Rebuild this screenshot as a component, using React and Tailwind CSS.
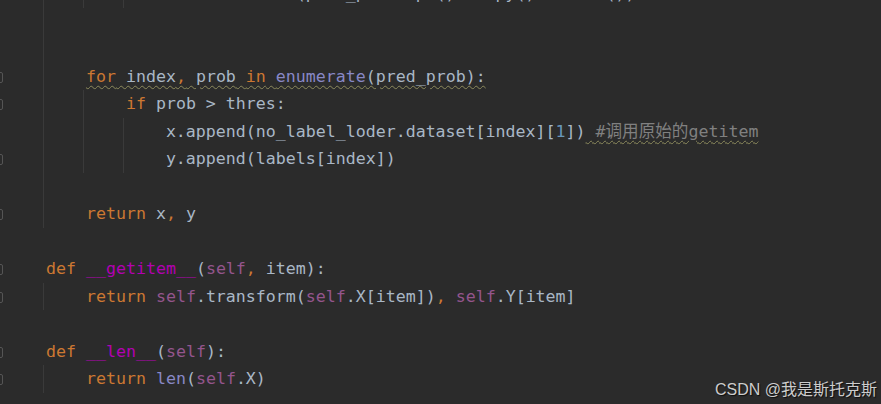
const K = "text-[#cc7832]";
const S = "text-[#94558d]";
const M = "text-[#b200b2]";
const B = "text-[#8888c6]";
const N = "text-[#6897bb]";
const WAVY = "underline decoration-wavy decoration-[#8c8a5c] decoration-1 underline-offset-[3px]";

const GUIDE_X = ["left-[43px]", "left-[83px]", "left-[123px]"];

const lines = [
  {
    guides: [0, 1, 2],
    code: (
      <>
        {"                         (pred_prob.cpu().numpy().tolist())"}
      </>
    ),
  },
  { guides: [0] },
  { guides: [0] },
  {
    guides: [0],
    fold: true,
    code: (
      <>
        {"    "}
        <span className={WAVY}>
          <span className={K}>for</span> index<span className={K}>,</span> prob{" "}
          <span className={K}>in</span> <span className={B}>enumerate</span>(pred_prob):
        </span>
      </>
    ),
  },
  {
    guides: [0, 1],
    fold: true,
    code: (
      <>
        {"        "}
        <span className={K}>if</span> prob &gt; thres:
      </>
    ),
  },
  {
    guides: [0, 1, 2],
    code: (
      <>
        {"            x.append(no_label_loder.dataset[index]["}
        <span className={N}>1</span>
        {"])"}
        <span className={`${WAVY} text-[#808080]`}>{" #调用原始的getitem"}</span>
      </>
    ),
  },
  {
    guides: [0, 1, 2],
    fold: true,
    code: <>{"            y.append(labels[index])"}</>,
  },
  { guides: [0] },
  {
    guides: [0],
    fold: true,
    code: (
      <>
        {"    "}
        <span className={K}>return</span> x<span className={K}>,</span> y
      </>
    ),
  },
  { guides: [] },
  {
    guides: [],
    fold: true,
    code: (
      <>
        <span className={K}>def</span> <span className={M}>__getitem__</span>(
        <span className={S}>self</span>
        <span className={K}>,</span> item):
      </>
    ),
  },
  {
    guides: [0],
    fold: true,
    code: (
      <>
        {"    "}
        <span className={K}>return</span> <span className={S}>self</span>.transform(
        <span className={S}>self</span>.X[item])<span className={K}>,</span>{" "}
        <span className={S}>self</span>.Y[item]
      </>
    ),
  },
  { guides: [] },
  {
    guides: [],
    fold: true,
    code: (
      <>
        <span className={K}>def</span> <span className={M}>__len__</span>(
        <span className={S}>self</span>):
      </>
    ),
  },
  {
    guides: [0],
    fold: true,
    code: (
      <>
        {"    "}
        <span className={K}>return</span> <span className={B}>len</span>(
        <span className={S}>self</span>.X)
      </>
    ),
  },
  { guides: [] },
];

function CodeLine({ line }) {
  return (
    <div className="relative h-[27.5px] whitespace-pre pl-[46px] leading-[27.5px]">
      {line.guides.map((g) => (
        <div key={g} className={`absolute top-0 h-full w-px bg-[#3a3a3a] ${GUIDE_X[g]}`} />
      ))}
      {line.fold && (
        <div className="absolute left-[-7px] top-[9px] h-[11px] w-[10px] rounded-[2px] border border-[#555555]" />
      )}
      {line.code}
    </div>
  );
}

export default function App() {
  return (
    <div className="relative h-[404px] w-[881px] overflow-hidden bg-[#2b2b2b]">
      <div
        className="mt-[-20px] text-[16.6px] text-[#a9b7c6]"
        style={{ fontFamily: '"DejaVu Sans Mono", "Noto Sans CJK SC", monospace' }}
      >
        {lines.map((line, i) => (
          <CodeLine key={i} line={line} />
        ))}
      </div>

      <div
        className="absolute bottom-[6px] right-[4px] text-[16px] leading-none text-[#cccccc] [text-shadow:1px_1px_1px_rgba(0,0,0,0.7)]"
        style={{ fontFamily: '"Liberation Sans", "Noto Sans CJK SC", sans-serif' }}
      >
        CSDN @我是斯托克斯
      </div>
    </div>
  );
}
